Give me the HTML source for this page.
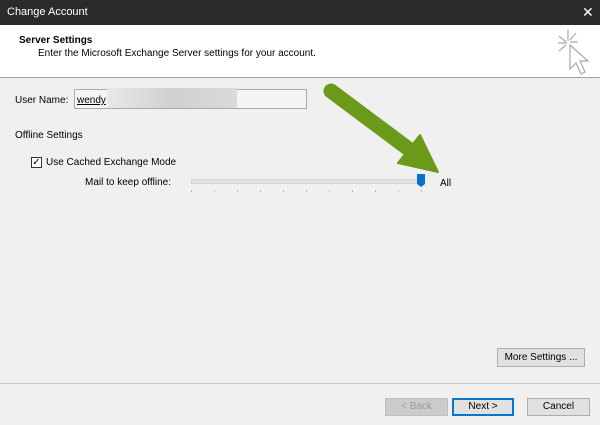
<!DOCTYPE html>
<html><head><style>
body{margin:0;width:600px;height:425px;background:#f0f0f0;font-family:"Liberation Sans",sans-serif;font-size:10px;color:#000;position:relative;overflow:hidden}
.a{position:absolute}
.btn{position:absolute;background:#e1e1e1;border:1px solid #adadad;box-sizing:border-box;text-align:center;line-height:17px;font-size:10px}
</style></head><body>
<div class="a" style="left:0;top:0;width:600px;height:25px;background:#2b2b2b"></div>
<div class="a" style="left:7px;top:6px;color:#fff;font-size:11px">Change Account</div>
<div class="a" style="left:582px;top:4px;color:#fff;font-size:14px">✕</div>
<div class="a" style="left:0;top:25px;width:600px;height:52px;background:#fff;border-bottom:1px solid #a0a0a0"></div>
<div class="a" style="left:19px;top:35px;font-weight:bold">Server Settings</div>
<div class="a" style="left:38px;top:48px">Enter the Microsoft Exchange Server settings for your account.</div>
<svg class="a" style="left:556px;top:28px" width="36" height="48" viewBox="0 0 36 48" fill="none" stroke="#aaa" stroke-width="1.2">
<path d="M12 2v11M3 8l7 6M2 15h9M20 5l-6 7M22 14h-8M3 23l7-6"/>
<path d="M14 17l0 24 6-6 5 11 4-2-5-11 8 0z" fill="#fff"/>
</svg>
<div class="a" style="left:15px;top:95px">User Name:</div>
<div class="a" style="left:74px;top:89px;width:233px;height:20px;background:#f4f4f4;border:1px solid #aaa;box-sizing:border-box"></div>
<div class="a" style="left:77px;top:95px;text-decoration:underline">wendy</div>
<div class="a" style="left:107px;top:88px;width:130px;height:20px;background:linear-gradient(90deg,#e8e8e8,#d0d0d0 50%,#dadada)"></div>
<div class="a" style="left:15px;top:130px">Offline Settings</div>
<div class="a" style="left:31px;top:157px;width:11px;height:11px;border:1px solid #333;background:#fff;box-sizing:border-box;font-size:10px;line-height:9px;text-align:center">✓</div>
<div class="a" style="left:46px;top:157px">Use Cached Exchange Mode</div>
<div class="a" style="left:85px;top:177px">Mail to keep offline:</div>
<div class="a" style="left:191px;top:179px;width:232px;height:3px;background:#e3e3e3;border:1px solid #d6d6d6"></div>
<svg class="a" style="left:185px;top:188px" width="250" height="6"><g fill="#bbb">
<rect x="6" y="2" width="1" height="2"/><rect x="29" y="2" width="1" height="2"/><rect x="52" y="2" width="1" height="2"/><rect x="75" y="2" width="1" height="2"/><rect x="98" y="2" width="1" height="2"/><rect x="121" y="2" width="1" height="2"/><rect x="144" y="2" width="1" height="2"/><rect x="167" y="2" width="1" height="2"/><rect x="190" y="2" width="1" height="2"/><rect x="213" y="2" width="1" height="2"/><rect x="236" y="2" width="1" height="2"/></g></svg>
<svg class="a" style="left:417px;top:174px" width="9" height="14"><path d="M0 0h8v10l-4 3-4-3z" fill="#0b6fce"/></svg>
<div class="a" style="left:440px;top:178px">All</div>
<svg class="a" style="left:0;top:0" width="600" height="425"><g fill="#6b9a1a" stroke="#6b9a1a">
<path d="M331 91L414 153" stroke-width="15" stroke-linecap="round"/>
<path d="M398 163L420 135L438 172z" stroke-width="2" stroke-linejoin="round"/></g></svg>
<div class="btn" style="left:497px;top:348px;width:88px;height:19px">More Settings ...</div>
<div class="a" style="left:0;top:383px;width:600px;height:1px;background:#c8c8c8"></div>
<div class="btn" style="left:385px;top:398px;width:63px;height:18px;color:#9a9a9a;background:#ccc;border-color:#bfbfbf;line-height:16px">&lt; Back</div>
<div class="btn" style="left:452px;top:398px;width:62px;height:18px;border:2px solid #0078d7;line-height:14px">Next &gt;</div>
<div class="btn" style="left:527px;top:398px;width:63px;height:18px;line-height:16px">Cancel</div>
</body></html>
